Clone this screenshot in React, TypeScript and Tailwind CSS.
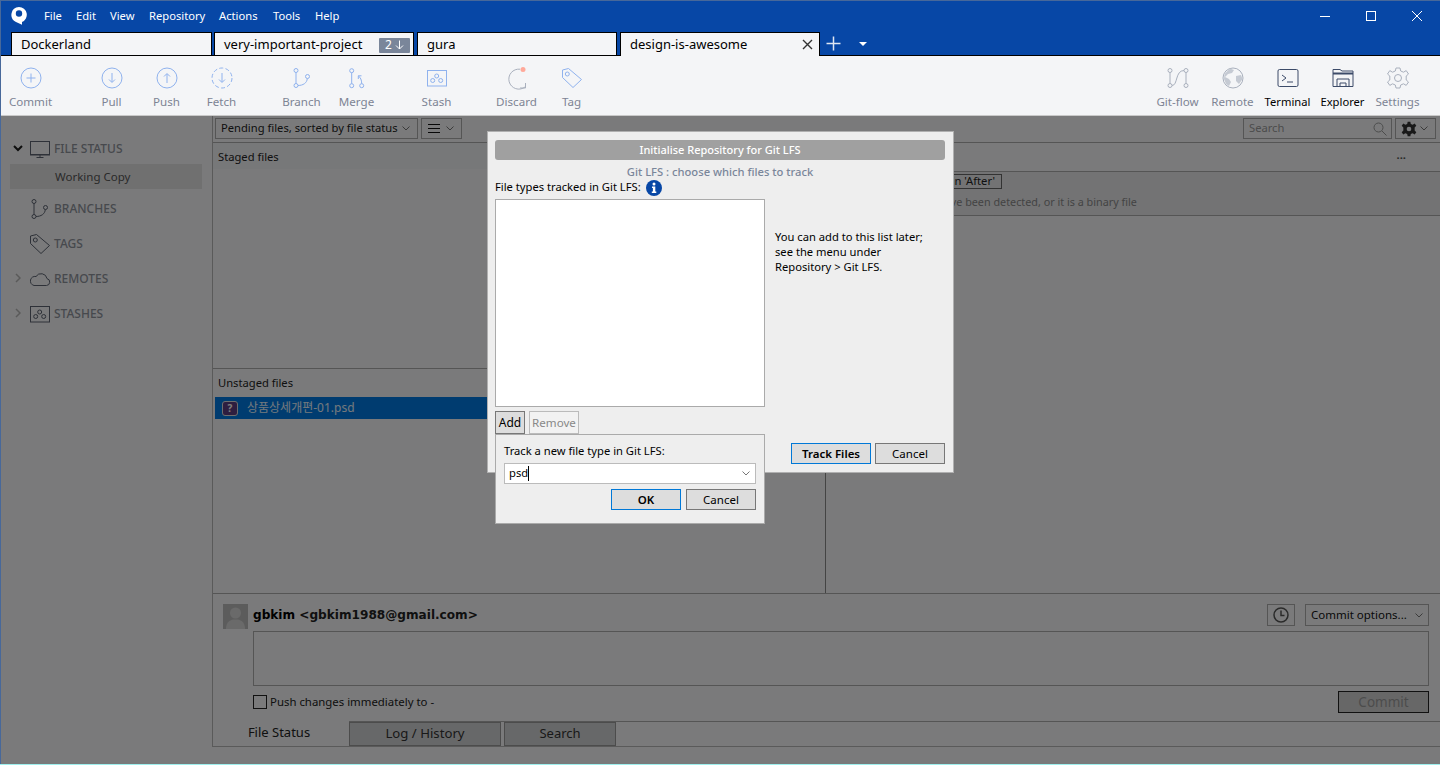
import { ReactNode } from "react";

const blue = "#8fb2ee";
const grey = "#a9b0bd";
const sideInk = "#5c6270";

function Ic({ children, size = 24 }: { children: ReactNode; size?: number }) {
  return (
    <svg width={size} height={size} viewBox="0 0 24 24" fill="none" strokeWidth="1">
      {children}
    </svg>
  );
}

function Ring({ dashed, up }: { dashed?: boolean; up?: boolean }) {
  return (
    <Ic>
      <circle cx="12" cy="12" r="10" stroke={blue} strokeDasharray={dashed ? "4 2.3" : undefined} />
      {up ? (
        <path d="M12 17V8M9 10.5L12 7.5L15 10.5" stroke={blue} />
      ) : (
        <path d="M12 7V16M9 13.5L12 16.5L15 13.5" stroke={blue} />
      )}
    </Ic>
  );
}

function BranchIcon({ color = blue }: { color?: string }) {
  return (
    <Ic>
      <circle cx="6" cy="4.5" r="2" stroke={color} />
      <circle cx="6" cy="19.5" r="2" stroke={color} />
      <circle cx="17.500" cy="10.500" r="2" stroke={color} />
      <path d="M6 6.500V17.500M8 19.500C13 19.500 17 17 17.300 12.500" stroke={color} />
    </Ic>
  );
}

function TagIcon({ color = blue }: { color?: string }) {
  return (
    <Ic>
      <path d="M2.500 4L8.500 2.500L21.500 13.500L13 21.500L2.500 11.500Z" stroke={color} strokeLinejoin="round" />
      <circle cx="7.300" cy="8" r="2" stroke={color} />
    </Ic>
  );
}

function StashIcon({ color = blue }: { color?: string }) {
  return (
    <Ic>
      <rect x="2.500" y="4.500" width="19" height="15.500" stroke={color} />
      <circle cx="11.700" cy="10" r="2" stroke={color} />
      <circle cx="7.700" cy="14.500" r="2" stroke={color} />
      <circle cx="15.700" cy="14.500" r="2" stroke={color} />
    </Ic>
  );
}

function Tool({ label, icon, dark }: { label: string; icon: ReactNode; dark?: boolean }) {
  return (
    <div className="w-[55px] flex flex-col items-center">
      <div className="h-[24px] mt-[10px] flex items-center justify-center">{icon}</div>
      <span className={`mt-[3px] leading-[17px] whitespace-nowrap ${dark ? "text-black text-[11.2px]" : "text-[#7d8494] text-[11.6px]"}`}>{label}</span>
    </div>
  );
}

function Tab({ name, width, active, children }: { name: string; width: string; active?: boolean; children?: ReactNode }) {
  return (
    <div className={`${width} h-[24px] bg-[#f4f5f7] border-x border-t border-black flex items-center pl-[9px] text-[13px] ${active ? "relative z-10" : "border-b pt-[2px]"}`}>
      <span>{name}</span>
      {children}
    </div>
  );
}

function SideRow({ label, icon, arrow }: { label: string; icon: ReactNode; arrow?: "open" | "closed" }) {
  return (
    <div className="h-[35px] flex items-center relative pl-[30px] text-[12px] font-medium text-[#8e929b]">
      {arrow === "open" && (
        <svg className="absolute left-[13px] top-[14px]" width="10" height="7" viewBox="0 0 10 7" fill="none">
          <path d="M1 1L5 5L9 1" stroke="#1c1c1c" strokeWidth="2" />
        </svg>
      )}
      {arrow === "closed" && (
        <svg className="absolute left-[15px] top-[12px]" width="6" height="10" viewBox="0 0 6 10" fill="none">
          <path d="M1 1L5 5L1 9" stroke="#b4b4b4" strokeWidth="1.5" />
        </svg>
      )}
      <div className="w-[24px] flex justify-center">{icon}</div>
      <span>{label}</span>
    </div>
  );
}

function Chev({ color = "#777" }: { color?: string }) {
  return (
    <svg width="8" height="5" viewBox="0 0 8 5" fill="none">
      <path d="M0.5 0.5L4 4L7.5 0.5" stroke={color} />
    </svg>
  );
}

function DlgButton({ children, focus, w, bold }: { children: ReactNode; focus?: boolean; w: string; bold?: boolean }) {
  return (
    <div className={`${w} h-[21px] bg-[#dddddd] border flex items-center justify-center text-[11.5px] ${focus ? "border-[#0078d7]" : "border-[#777]"} ${bold ? "font-semibold" : ""}`}>
      {children}
    </div>
  );
}

export default function App() {
  return (
    <div className="relative w-[1440px] h-[765px] overflow-hidden bg-[#f4f5f7] text-black" style={{ fontFamily: '"Noto Sans", "Noto Sans CJK KR", sans-serif' }}>
      {/* title bar */}
      <header className="h-[32px] bg-[#0747a6] flex items-center text-white text-[11.2px] pl-[11px]">
        <svg width="16" height="18" viewBox="0 0 16 18">
          <path fillRule="evenodd" fill="#fff" d="M8 0A7.800 7.800 0 0 1 11 15V17.800L5 15V14.900A7.800 7.800 0 0 1 8 0ZM8 3.300A3.200 3.200 0 1 0 8 9.700A3.200 3.200 0 1 0 8 3.300Z" />
        </svg>
        <nav className="flex ml-[17px]">
          <span className="w-[32px]">File</span>
          <span className="w-[34px]">Edit</span>
          <span className="w-[39px]">View</span>
          <span className="w-[70px]">Repository</span>
          <span className="w-[54px]">Actions</span>
          <span className="w-[42px]">Tools</span>
          <span>Help</span>
        </nav>
        <div className="ml-auto flex items-center">
          <div className="w-[46px] flex justify-center"><div className="w-[10px] h-px bg-white" /></div>
          <div className="w-[46px] flex justify-center"><div className="w-[10px] h-[10px] border border-white" /></div>
          <div className="w-[46px] flex justify-center">
            <svg width="12" height="12" viewBox="0 0 12 12"><path d="M1 1L11 11M11 1L1 11" stroke="#fff" /></svg>
          </div>
        </div>
      </header>

      {/* repo tabs */}
      <div className="h-[24px] bg-[#0747a6] flex pl-[11px] relative">
        <div className="absolute left-0 right-0 bottom-0 h-[1px] bg-black" />
        <div className="flex relative">
          <Tab name="Dockerland" width="w-[201px]" />
          <Tab name="very-important-project" width="w-[200px] ml-[2px]">
            <span className="ml-auto mr-[3px] w-[31px] h-[15px] bg-[#7a869a] rounded-[1px] text-white text-[12px] flex items-center justify-center gap-[3px]">
              2
              <svg width="9" height="10" viewBox="0 0 9 10" fill="none"><path d="M4.500 0.500V9M1 5.500L4.500 9L8 5.500" stroke="#fff" /></svg>
            </span>
          </Tab>
          <Tab name="gura" width="w-[200px] ml-[3px]" />
          <Tab name="design-is-awesome" width="w-[200px] ml-[3px]" active>
            <svg className="ml-auto mr-[6px]" width="11" height="11" viewBox="0 0 11 11"><path d="M1 1L10 10M10 1L1 10" stroke="#333" strokeWidth="1.4" /></svg>
          </Tab>
        </div>
        <svg className="ml-[6px] mt-[4px]" width="15" height="15" viewBox="0 0 15 15"><path d="M7.500 0.500V14.500M0.500 7.500H14.500" stroke="#dfe6f2" strokeWidth="1.5" /></svg>
        <div className="ml-[18px] mt-[10px] w-0 h-0 border-x-[4px] border-x-transparent border-t-[4px] border-t-white" />
      </div>

      {/* toolbar */}
      <div className="h-[60px] flex pl-[3px] pr-[15px] border-b border-[#c9c9c9]">
        <Tool label="Commit" icon={
          <Ic>
            <circle cx="12" cy="12" r="10" stroke={blue} />
            <path d="M12 7.500V16.500M7.500 12H16.500" stroke={blue} />
          </Ic>
        } />
        <div className="flex ml-[26px]">
          <Tool label="Pull" icon={<Ring />} />
          <Tool label="Push" icon={<Ring up />} />
          <Tool label="Fetch" icon={<Ring dashed />} />
        </div>
        <div className="flex ml-[25px]">
          <Tool label="Branch" icon={<BranchIcon />} />
          <Tool label="Merge" icon={
            <Ic>
              <circle cx="6.700" cy="4.700" r="2" stroke={blue} />
              <circle cx="6.700" cy="19.700" r="2" stroke={blue} />
              <circle cx="16.700" cy="19.700" r="2" stroke={blue} />
              <path d="M6.700 6.700V17.700M16.700 17.700C16.700 14 15.500 11.500 13.500 10M13.300 13V9.800H16.500" stroke={blue} />
            </Ic>
          } />
        </div>
        <div className="ml-[25px]">
          <Tool label="Stash" icon={<StashIcon />} />
        </div>
        <div className="flex ml-[25px]">
          <Tool label="Discard" icon={
            <Ic>
              <path d="M15 3.200A10 10 0 1 0 20 21" stroke={grey} />
              <path d="M15 22H20.500V17" stroke={grey} />
              <circle cx="18" cy="3.500" r="2.500" fill="#ffa99a" />
            </Ic>
          } />
          <Tool label="Tag" icon={<TagIcon />} />
        </div>
        <div className="flex ml-auto">
          <Tool label="Git-flow" icon={
            <Ic>
              <circle cx="4" cy="4.500" r="2" stroke={grey} />
              <circle cx="4" cy="19.500" r="2" stroke={grey} />
              <circle cx="20" cy="4.500" r="2" stroke={grey} />
              <circle cx="20" cy="19.500" r="2" stroke={grey} />
              <path d="M4 6.500V17.500M20 6.500V17.500M6 19.500C12 19.500 9 4.500 18 4.500" stroke={grey} />
            </Ic>
          } />
          <Tool label="Remote" icon={
            <Ic>
              <circle cx="12" cy="12" r="10" stroke={grey} />
              <path fill="#c5cad3" d="M9 2.500L13 4L11 7L7 8L4 11L8 13L10 16L8 20L5 18L3 13L3.500 8ZM15 10L20 9L21.500 13L18 18L15 15Z" />
            </Ic>
          } />
          <Tool label="Terminal" dark icon={
            <Ic>
              <rect x="2" y="3.500" width="20" height="17" rx="1.500" stroke="#3c4b69" />
              <path d="M6 9L10 12L6 15M11 16H17" stroke="#3c4b69" />
            </Ic>
          } />
          <Tool label="Explorer" dark icon={
            <Ic>
              <path d="M2 20.500V3.500H9L11 5H22V20.500Z" stroke="#3c4b69" />
              <path d="M2 7.500H22" stroke="#3c4b69" strokeWidth="2" />
              <path d="M6 20.500V13H18V20.500M9 20.500V17H15V20.500" stroke="#3c4b69" />
            </Ic>
          } />
          <Tool label="Settings" icon={
            <Ic>
              <path stroke={grey} d="M10 2H14L14.700 5L17.500 6.200L20.200 4.600L22.500 8L20.200 10L20.200 14L22.500 16L20.200 19.400L17.500 17.800L14.700 19L14 22H10L9.300 19L6.500 17.800L3.800 19.400L1.500 16L3.800 14L3.800 10L1.500 8L3.800 4.600L6.500 6.200L9.300 5Z" />
              <circle cx="12" cy="12" r="3.500" stroke={grey} />
            </Ic>
          } />
        </div>
      </div>

      {/* main */}
      <main className="relative h-[649px] flex">
        <aside className="w-[212px] shrink-0 pt-[15px]">
          <SideRow label="FILE STATUS" arrow="open" icon={
            <Ic>
              <rect x="0.500" y="4.500" width="19" height="13" stroke={sideInk} />
              <path d="M0 18H20M6.500 20.500H13.500M10 18V20" stroke={sideInk} />
            </Ic>
          } />
          <div className="mx-[10px] mt-[-2px] h-[25px] bg-[#e0e0e0] flex items-center pl-[45px] text-[11.5px] text-[#555]">Working Copy</div>
          <div className="h-[2px]" />
          <SideRow label="BRANCHES" icon={<span className="ml-[-4px]"><BranchIcon color={sideInk} /></span>} />
          <SideRow label="TAGS" icon={<span className="ml-[-4px]"><TagIcon color={sideInk} /></span>} />
          <SideRow label="REMOTES" arrow="closed" icon={
            <Ic>
              <path d="M4 18.500H16.500A3.500 3.500 0 0 0 17 11.600A6 6 0 0 0 6 9.500A4.500 4.500 0 0 0 4 18.500Z" stroke={sideInk} />
            </Ic>
          } />
          <SideRow label="STASHES" arrow="closed" icon={<span className="ml-[-4px]"><StashIcon color={sideInk} /></span>} />
        </aside>

        <section className="flex-1 flex flex-col border-l border-[#b5b5b5] h-[631px] border-b">
          {/* filter row */}
          <div className="h-[27px] shrink-0 flex pt-[2px] pl-[2px] pr-[4px] border-b border-[#aaa] text-[11.2px]">
            <div className="w-[203px] h-[21px] border border-[#aaa] flex items-center justify-between pl-[5px] pr-[7px] text-[#222]">
              Pending files, sorted by file status <Chev />
            </div>
            <div className="ml-[3px] w-[41px] h-[21px] border border-[#aaa] flex items-center justify-between pl-[6px] pr-[7px]">
              <div className="w-[12px] h-[9px] border-y border-[#111] flex items-center"><div className="w-full h-px bg-[#111]" /></div>
              <Chev />
            </div>
            <div className="ml-auto w-[149px] h-[21px] border border-[#aaa] flex items-center justify-between pl-[5px] pr-[4px] text-[#999]">
              Search
              <svg width="14" height="14" viewBox="0 0 14 14" fill="none"><circle cx="5.500" cy="5.500" r="4.500" stroke="#999" /><path d="M9 9L13.500 13.500" stroke="#999" /></svg>
            </div>
            <div className="ml-[3px] w-[41px] h-[21px] border border-[#aaa] flex items-center justify-between pl-[5px] pr-[7px]">
              <svg width="16" height="16" viewBox="0 0 24 24">
                <path fill="#333" fillRule="evenodd" d="M10 1H14L14.700 4.500L17.500 5.700L20.500 3.800L23 7L20.500 9.600V14.400L23 17L20.500 20.200L17.500 18.300L14.700 19.500L14 23H10L9.300 19.500L6.500 18.300L3.500 20.200L1 17L3.500 14.400V9.600L1 7L3.500 3.800L6.500 5.700L9.300 4.500ZM12 8.500A3.500 3.500 0 1 0 12 15.500A3.500 3.500 0 1 0 12 8.500Z" />
              </svg>
              <Chev />
            </div>
          </div>

          {/* file panes */}
          <div className="h-[451px] shrink-0 flex border-b border-[#aaa]">
            <div className="w-[613px] shrink-0 border-r border-[#888] flex flex-col">
              <div className="h-[226px] shrink-0 border-b border-[#aaa]">
                <div className="h-[26px] bg-[#eff0f2] pl-[5px] flex items-center pt-[2px] text-[11.2px] text-[#222]">Staged files</div>
              </div>
              <div className="pl-[5px] pt-[5px] text-[11.2px] text-[#222] h-[28px] leading-[17px]">Unstaged files</div>
              <div className="mx-[2px] h-[22px] bg-[#0079e0] flex items-center pl-[7px] text-[12px] text-white">
                <span className="w-[16px] h-[15px] rounded-[3px] bg-[#5d3d80] border border-[#ddd] flex items-center justify-center font-bold text-[10px]">?</span>
                <span className="ml-[9px] opacity-90">상품상세개편-01.psd</span>
              </div>
            </div>
            <div className="flex-1 flex flex-col text-[11.2px]">
              <div className="h-[29px] flex justify-end pr-[34px] pt-[4px] font-bold text-[#555] border-b border-[#aaa]">...</div>
              <div className="h-[44px] bg-[#e6e7e9] border-b border-[#aaa] pl-[18px]">
                <div className="mt-[2px] ml-[59px] w-[99px] h-[15px] border border-[#666] flex items-center justify-end pr-[6px] text-[#222]">Open in 'After'</div>
                <div className="mt-[5px] text-[10.8px] text-[#888]">Either no changes have been detected, or it is a binary file</div>
              </div>
            </div>
          </div>

          {/* commit box */}
          <div className="flex-1 flex flex-col pl-[10px] pr-[11px] relative">
            <div className="flex pt-[10px] h-[37px]">
              <div className="w-[25px] h-[25px] bg-[#b9b9b9] overflow-hidden flex items-center justify-center">
                <svg width="25" height="25" viewBox="0 0 25 25"><circle cx="12.500" cy="9" r="5.500" fill="#d5d5d5" /><path d="M3 25C3 17 8 15.500 12.500 15.500S22 17 22 25Z" fill="#d5d5d5" /></svg>
              </div>
              <span className="ml-[5px] mt-[2px] text-[12.100px] font-bold leading-[18px]" style={{ fontFamily: '"DejaVu Sans", sans-serif' }}>gbkim <span className="text-[#222]">&lt;gbkim1988@gmail.com&gt;</span></span>
              <div className="ml-auto w-[28px] h-[22px] border border-[#aaa] flex items-center justify-center">
                <svg width="16" height="16" viewBox="0 0 16 16" fill="none"><circle cx="8" cy="8" r="7" stroke="#555" strokeWidth="1.500" /><path d="M8 3.500V8.500H11.500" stroke="#555" strokeWidth="1.500" /></svg>
              </div>
              <div className="ml-[10px] w-[124px] h-[22px] border border-[#aaa] flex items-center justify-between pl-[5px] pr-[5px] text-[11.5px] text-[#111]">
                Commit options... <Chev />
              </div>
            </div>
            <div className="ml-[30px] h-[55px] border border-[#aaa]" />
            <div className="ml-[30px] mt-[5px] flex items-center h-[22px] text-[11.400px] text-[#222]">
              <div className="w-[14px] h-[14px] border border-[#222]" />
              <span className="ml-[3px]">Push changes immediately to -</span>
              <div className="ml-auto w-[91px] h-[22px] border border-[#222] bg-[#cfcfcf] flex items-center justify-center text-[13.500px] text-[#999]">Commit</div>
            </div>
            <div className="absolute left-[136px] right-0 bottom-0 h-[25px] flex border-t border-[#aaa]">
              <div className="w-[152px] h-[24px] bg-[#cfd0d2] border border-[#999] flex items-center justify-center text-[13.200px] text-[#333]">Log / History</div>
              <div className="w-[112px] h-[24px] bg-[#cfd0d2] border border-[#999] ml-[3px] flex items-center justify-center text-[13px] text-[#333]">Search</div>
            </div>
            <div className="absolute left-0 w-[132px] bottom-[1px] h-[24px] flex items-center justify-center text-[13px] text-[#222]">File Status</div>
          </div>
        </section>

        {/* dim behind the dialog */}
        <div className="absolute inset-0 bg-black/50" />

        {/* git lfs dialog */}
        <div className="absolute left-[487px] top-[15px] w-[467px] h-[342px] bg-[#eeeeee] border border-[#b0b0b0] pl-[7px] pr-[8px] pt-[8px] text-[11.2px]">
          <div className="h-[20px] rounded-[3px] bg-[#a0a0a0] text-white flex items-center justify-center font-medium text-[11px]">Initialise Repository for Git LFS</div>
          <div className="mt-[3px] h-[18px] text-center text-[#7a869a] font-medium leading-[18px]">Git LFS : choose which files to track</div>
          <div className="flex items-center h-[15px] mt-[-1px]">
            File types tracked in Git LFS:
            <svg className="ml-[5px]" width="16" height="16" viewBox="0 0 16 16">
              <circle cx="8" cy="8" r="8" fill="#0747a6" />
              <circle cx="8" cy="4" r="1.500" fill="#fff" />
              <path d="M6 6.500H9.300V11.500H10.300V13H5.800V11.500H6.900V8H6Z" fill="#fff" />
            </svg>
          </div>
          <div className="flex mt-[4px]">
            <div className="w-[270px] h-[208px] bg-white border border-[#aaa]" />
            <div className="ml-[10px] mt-[30px] leading-[15px] w-[165px]">
              You can add to this list later;<br />see the menu under<br />Repository &gt; Git LFS.
            </div>
          </div>
          <div className="flex mt-[4px] gap-[4px]">
            <div className="w-[30px] h-[23px] bg-[#dddddd] border border-[#777] flex items-center justify-center pt-[1px] text-[12px]">Add</div>
            <div className="w-[50px] h-[23px] bg-[#f2f2f2] border border-[#bbb] flex items-center justify-center pt-[1px] text-[11.600px] text-[#888]">Remove</div>
          </div>
          <div className="absolute right-[8px] top-[311px] flex gap-[4px]">
            <DlgButton w="w-[80px]" focus bold>Track Files</DlgButton>
            <DlgButton w="w-[70px]">Cancel</DlgButton>
          </div>
        </div>

        {/* add file type popup */}
        <div className="absolute left-[495px] top-[318px] w-[270px] h-[90px] bg-[#eeeeee] border border-[#aaa] px-[8px] pt-[7px] text-[11.2px]">
          <div className="leading-[17px]">Track a new file type in Git LFS:</div>
          <div className="mt-[4px] h-[21px] bg-white border border-[#bbb] flex items-center pl-[4px] pr-[5px]">
            psd<div className="w-px h-[15px] bg-black" />
            <div className="ml-auto"><Chev /></div>
          </div>
          <div className="mt-[5px] flex justify-end gap-[5px]">
            <DlgButton w="w-[70px]" focus bold>OK</DlgButton>
            <DlgButton w="w-[70px]">Cancel</DlgButton>
          </div>
        </div>
      </main>

      {/* window edge */}
      <div className="absolute inset-0 border-t border-l border-t-[#47689a] border-l-[#47689a] pointer-events-none" />
      <div className="absolute left-0 right-0 bottom-0 h-px bg-[#9ff0ee]" />
    </div>
  );
}
